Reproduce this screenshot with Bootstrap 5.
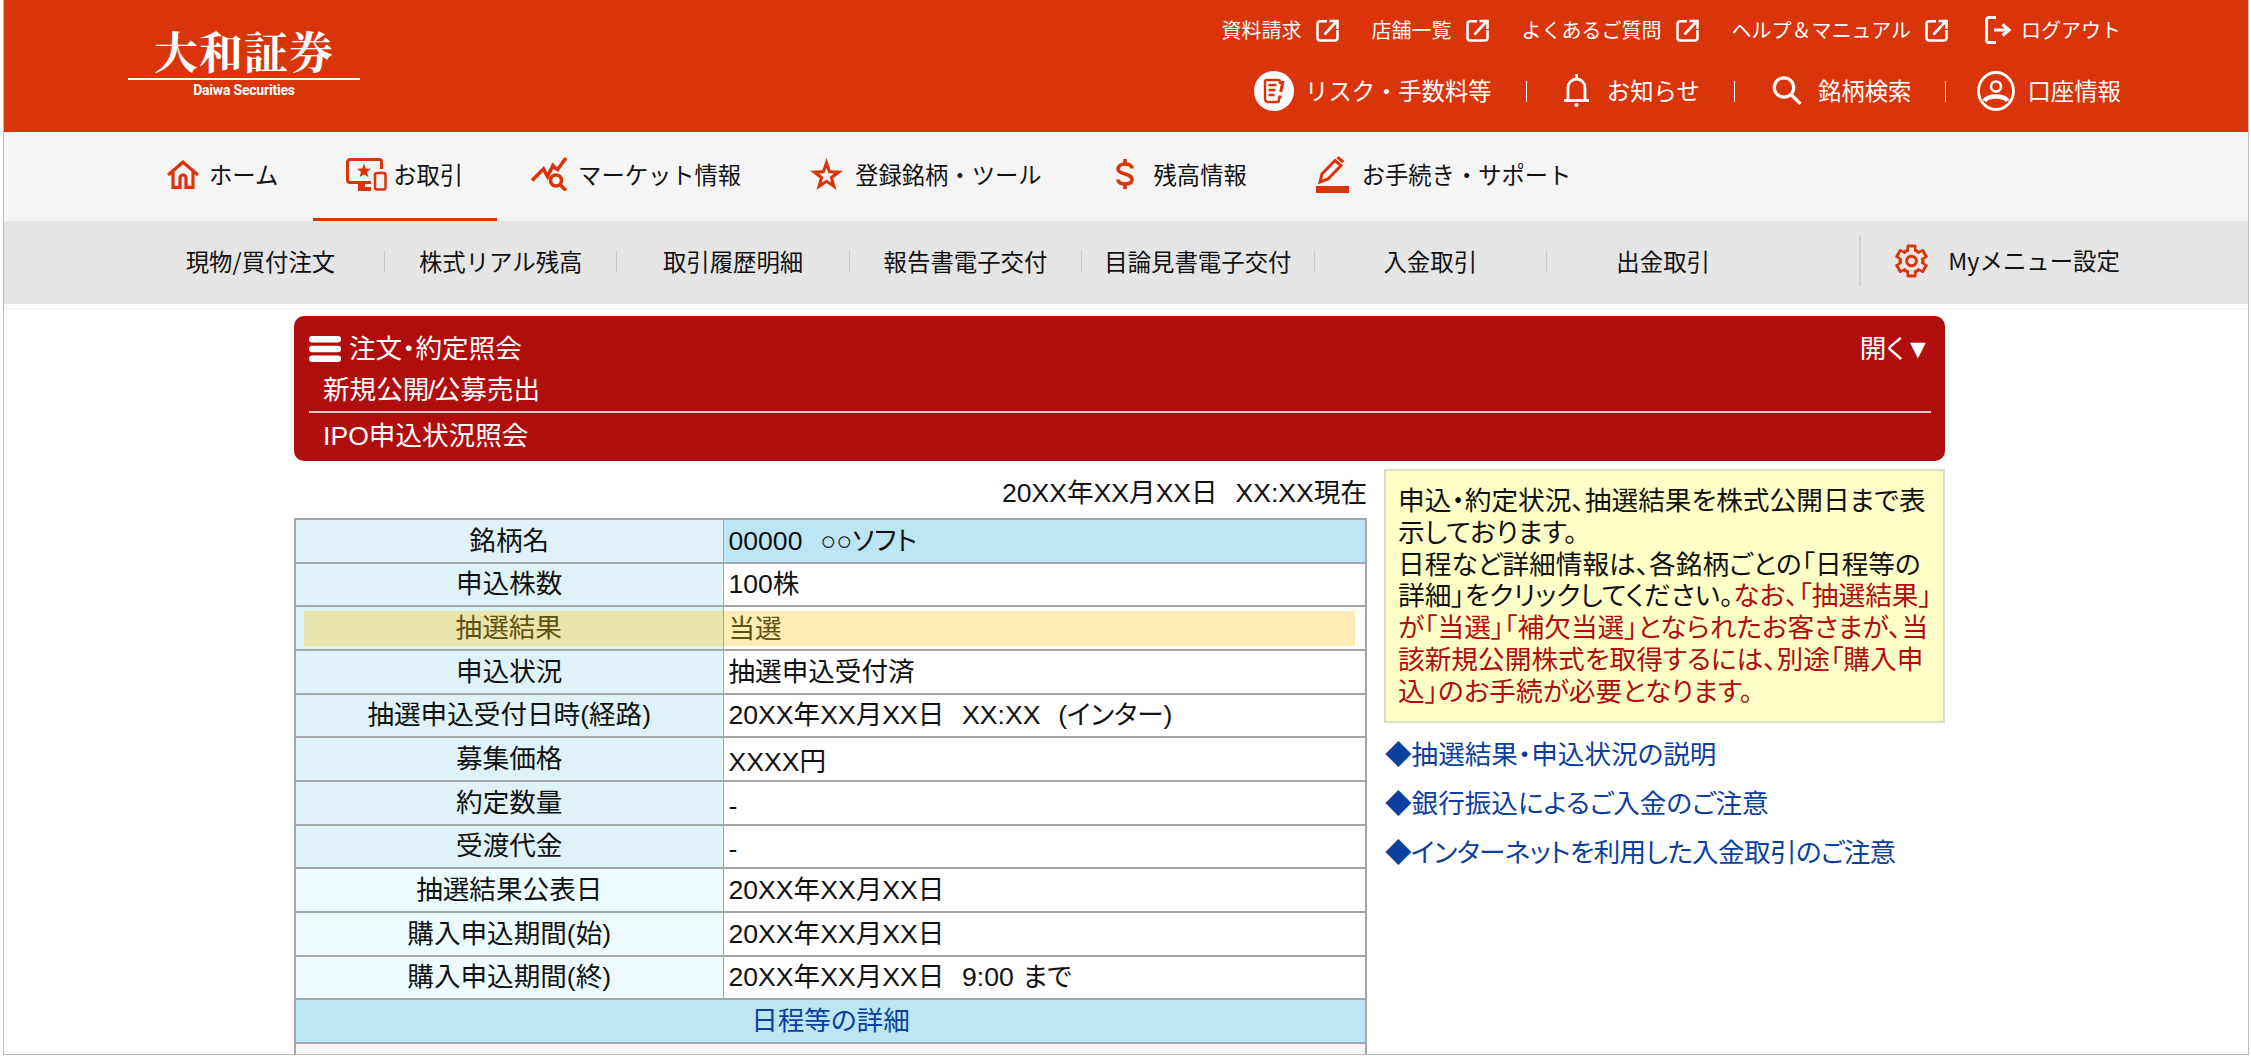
<!DOCTYPE html>
<html lang="ja">
<head>
<meta charset="utf-8">
<title>大和証券</title>
<link href="https://cdn.jsdelivr.net/npm/bootstrap@5.3.0/dist/css/bootstrap.min.css" rel="stylesheet">
<style>
html,body{height:100%;overflow:hidden;background:#fff}
body{font-family:"Noto Sans CJK JP","Liberation Sans",sans-serif;color:#111}
.frame{margin:0 2px 0 3px;height:1055px;overflow:hidden;border:solid #bdbdbd;border-width:0 1px 1px 1px}
.hdr{height:132px;background:#d9340a;color:#fff}
.logo-wrap{margin-left:124px;width:232px;padding-top:25px;text-align:center}
.logo-jp{font-family:"Noto Serif CJK JP","Noto Sans CJK JP",serif;font-size:44px;line-height:50px;letter-spacing:1px;font-weight:700}
.logo-rule{height:2px;background:#fff;margin-top:3px}
.logo-en{font-family:"Roboto",sans-serif;font-weight:700;font-size:14px;line-height:20px;letter-spacing:-.2px}
.util-col{padding-right:127px}
.util-row1{height:60px;font-size:20px}
.util-row2{height:62px;font-size:23.4px}
.util-item{margin-left:33px;gap:14px;white-space:nowrap}
.util-item svg,.gnav-item svg{display:block;flex:none}
.logout{margin-left:37px;gap:9px}
.row2-item{gap:11px;white-space:nowrap}
.gap-bell{gap:17px;margin-left:2px}
.gap-find{gap:16px;margin-left:3px}
.gap-acct{gap:12px;margin-left:-3px}
.sep-v{width:1px;height:21px;background:#fff;margin:0 34px 0 34px;flex:none}
.gnav{height:89px;background:#f5f5f5;padding-left:129px;font-size:23.3px}
.gnav-item{height:89px;gap:10px;padding:0 35px 2px;white-space:nowrap;border-bottom:3px solid transparent}
.gnav-item.cur{border-bottom-color:#d9340a;padding:0 34px 2px 33px;gap:6px}
.gi-home{padding-left:34px}
.gi-mkt{padding-left:34px}
.gi-star{padding-left:34px;padding-right:37px;gap:12px}
.gi-cash{padding-left:37px;padding-right:34px;gap:20px}
.gi-form{gap:13px}
.snav{height:83px;background:#e5e5e5;margin-bottom:4px;font-size:23.4px;padding:0 0 3px 133px}
.snav-cell{width:232.4px;height:22px;text-align:center;border-right:1px solid #c9c9c9;line-height:22px;white-space:nowrap;flex:none}
.snav-cell.first{width:248px}
.snav-cell.last{border-right:0}
.snav-cfg{margin-left:80px;height:50px;border-left:2px solid #cfcfcf;padding-left:34px;gap:20px;white-space:nowrap}
.mainzone{border-top:1px solid #f0f0f0;padding:7px 0 0 290px;font-family:"Liberation Sans","Noto Sans CJK JP",sans-serif;font-size:26.6px;font-feature-settings:"palt"}
.pane{width:1651px}
.redbar{background:#b00d0d;color:#fff;border-radius:10px;height:145px;padding:15px 14px 0 15px}
.rb-line{line-height:36px;white-space:nowrap}
.rb-sub{padding-left:14px;margin-top:5px}
.rb-rule{height:2px;background:#e6c8c8;margin-top:3px;margin-bottom:5px}
.slash-nar{margin:0 -1.500px}
.burger{width:32px;height:26px;display:block;margin-right:8px}
.leftcol{width:1073px}
.rightcol{width:561px}
.asof{height:49px;line-height:49px;text-align:right;white-space:pre;word-spacing:1.5px}
.ipo-table{width:1073px;table-layout:fixed;margin:0;border-collapse:collapse;border:2px solid #a5a5a5}
.ipo-table td{height:43.67px;padding:0 5px;border:2px solid #a5a5a5;border-left-width:1px;border-right-width:1px;vertical-align:middle;line-height:30px;background:#fff;color:#111;white-space:pre;box-shadow:none;word-spacing:1.5px}
.ipo-table td.lb{text-align:center;background:#dff2f8;padding:0}
.ipo-table td.lb2{text-align:center;background:#eefbfe;padding:0}
.ipo-table td.hd{background:#bce6f5}
.ipo-table td.hc{text-align:center;background:#bce6f5;color:#0d3f9e}
.ipo-table td.gr{background:#f6f6f6}
.ipo-table td.low{padding-top:6px}
.hl-l{margin-left:8px;height:35px;line-height:35px;background:#e9e3ac;color:#5f5210;padding-right:9px}
.ipo-table td.hl-c{padding:0 10px 0 0}
.hl-r{height:35px;line-height:37px;background:#feecb5;color:#5f5210;padding-left:5px}
.notebox{background:#ffffc8;border:2px solid #dcdcc8;height:254px;padding:15px 4px 0 12px;line-height:31.8px;white-space:nowrap;font-size:26.7px}
.notered{color:#b00d0d}
.lnk{display:block;color:#0d3f9e;text-decoration:none;line-height:49px;white-space:nowrap;padding-left:1px}
.lnk-tight{letter-spacing:-.65px}
.lnks{margin-top:8px}
</style>
</head>
<body>
<div class="frame">
  <header class="hdr d-flex justify-content-between">
    <div class="logo-wrap">
      <div class="logo-jp">大和証券</div>
      <div class="logo-rule"></div>
      <div class="logo-en">Daiwa Securities</div>
    </div>
    <div class="util-col">
      <div class="util-row1 d-flex align-items-center justify-content-end">
        <a class="util-item d-flex align-items-center text-white text-decoration-none">資料請求
          <svg width="23" height="23" viewBox="0 0 23 23" fill="none" stroke="#fff" stroke-width="2.6"><path d="M11 2.3H4A2.5 2.5 0 0 0 1.5 4.8v14A2.7 2.7 0 0 0 4 21.5h15a2.5 2.5 0 0 0 2.5-2.5v-8"/><path d="M8.5 15.5L20 3M13.5 2h8v8"/></svg></a>
        <a class="util-item d-flex align-items-center text-white text-decoration-none">店舗一覧
          <svg width="23" height="23" viewBox="0 0 23 23" fill="none" stroke="#fff" stroke-width="2.6"><path d="M11 2.3H4A2.5 2.5 0 0 0 1.5 4.8v14A2.7 2.7 0 0 0 4 21.5h15a2.5 2.5 0 0 0 2.5-2.5v-8"/><path d="M8.5 15.5L20 3M13.5 2h8v8"/></svg></a>
        <a class="util-item d-flex align-items-center text-white text-decoration-none">よくあるご質問
          <svg width="23" height="23" viewBox="0 0 23 23" fill="none" stroke="#fff" stroke-width="2.6"><path d="M11 2.3H4A2.5 2.5 0 0 0 1.5 4.8v14A2.7 2.7 0 0 0 4 21.5h15a2.5 2.5 0 0 0 2.5-2.5v-8"/><path d="M8.5 15.5L20 3M13.5 2h8v8"/></svg></a>
        <a class="util-item d-flex align-items-center text-white text-decoration-none">ヘルプ＆マニュアル
          <svg width="23" height="23" viewBox="0 0 23 23" fill="none" stroke="#fff" stroke-width="2.6"><path d="M11 2.3H4A2.5 2.5 0 0 0 1.5 4.8v14A2.7 2.7 0 0 0 4 21.5h15a2.5 2.5 0 0 0 2.5-2.5v-8"/><path d="M8.5 15.5L20 3M13.5 2h8v8"/></svg></a>
        <a class="util-item logout d-flex align-items-center text-white text-decoration-none">
          <svg width="27" height="28" viewBox="0 0 27 28" fill="none" stroke="#fff" stroke-width="3"><path d="M11 1.5H4A2.5 2.5 0 0 0 1.5 4v20A2.5 2.5 0 0 0 4 26.5h7"/><path d="M9 14h14"/><path d="M17.5 8.5L24 14l-6.5 5.5" stroke-width="3.2"/></svg>ログアウト</a>
      </div>
      <div class="util-row2 d-flex align-items-center justify-content-end">
        <a class="row2-item d-flex align-items-center text-white text-decoration-none">
          <svg width="40" height="40" viewBox="0 0 40 40"><circle cx="20" cy="20" r="20" fill="#fff"/><g fill="none" stroke="#d9340a" stroke-width="2.4"><path d="M26 13v-2a2 2 0 0 0-2-2H13a2 2 0 0 0-2 2v17a3 3 0 0 0 3 3h9a2 2 0 0 0 2-2v-3"/><path d="M14.5 14h8M14.5 19h7M14.5 24h6"/><path d="M29 10l-2.2 11" stroke-width="3.2"/></g><circle cx="26" cy="26" r="1.8" fill="#d9340a"/></svg>リスク・手数料等</a>
        <span class="sep-v"></span>
        <a class="row2-item gap-bell d-flex align-items-center text-white text-decoration-none">
          <svg width="27" height="33" viewBox="0 0 27 33" fill="none" stroke="#fff" stroke-width="2.8"><path d="M13.5 0v4"/><path d="M5 26V13.5a8.5 8.5 0 0 1 17 0V26"/><path d="M1 26.5h25"/><circle cx="13.500" cy="31" r="2" fill="#fff" stroke="none"/></svg>お知らせ</a>
        <span class="sep-v"></span>
        <a class="row2-item gap-find d-flex align-items-center text-white text-decoration-none">
          <svg width="30" height="29" viewBox="0 0 30 29" fill="none" stroke="#fff" stroke-width="3.2"><circle cx="12" cy="11.500" r="9.700"/><path d="M19 18.500l9.500 9.500"/></svg>銘柄検索</a>
        <span class="sep-v"></span>
        <a class="row2-item gap-acct d-flex align-items-center text-white text-decoration-none">
          <svg width="38" height="40" viewBox="0 0 38 40" fill="none" stroke="#fff"><ellipse cx="19" cy="20" rx="17.500" ry="18.500" stroke-width="2.800"/><circle cx="19" cy="15.500" r="5" stroke-width="2.600"/><path d="M7.500 30c3-6 20-6 23 0" stroke-width="4.500"/></svg>口座情報</a>
      </div>
    </div>
  </header>

  <nav class="gnav d-flex">
    <a class="gnav-item gi-home d-flex align-items-center text-reset text-decoration-none">
      <svg width="32" height="29" viewBox="0 0 32 29" fill="none" stroke="#d9340a" stroke-width="3.200"><path d="M1 15L16 2.200 31 15"/><path d="M6 12v15.400h7V18a3 3 0 0 1 6 0v9.400h7V12"/></svg>ホーム</a>
    <a class="gnav-item cur d-flex align-items-center text-reset text-decoration-none">
      <svg width="41" height="33" viewBox="0 0 41 33"><path d="M25 24.500H4a2.500 2.500 0 0 1-2.500-2.500V4A2.500 2.500 0 0 1 4 1.500h29A2.500 2.500 0 0 1 35.500 4v7" fill="none" stroke="#d9340a" stroke-width="3"/><rect x="12" y="25" width="7" height="4" fill="#d9340a"/><rect x="12" y="29" width="13" height="4" fill="#d9340a"/><polygon fill="#d9340a" points="18,5.500 19.800,10.500 25,10.700 21,14 22.300,19 18,16.200 13.700,19 15,14 11,10.700 16.200,10.500"/><rect x="29" y="15" width="10.500" height="16.500" rx="1.800" fill="#f5f5f5" stroke="#d9340a" stroke-width="2.500"/></svg>お取引</a>
    <a class="gnav-item gi-mkt d-flex align-items-center text-reset text-decoration-none">
      <svg width="37" height="34" viewBox="0 0 37 34" fill="none" stroke="#d9340a" stroke-width="3.600"><path d="M1 23.500L12.500 12l4 7.500L22 8.500l3 3.500"/><path d="M25.500 14L35 1"/><circle cx="25" cy="23.500" r="5.500"/><path d="M29 27.500l6 6"/></svg>マーケット情報</a>
    <a class="gnav-item gi-star d-flex align-items-center text-reset text-decoration-none">
      <svg width="33" height="33" viewBox="0 0 33 33"><polygon fill="#d9340a" points="16.500,0 20.600,12.300 33,12.700 23.200,20.200 26.500,32 16.500,25 6.500,32 9.800,20.200 0,12.700 12.400,12.300"/><polygon fill="#f5f5f5" points="16.500,10 18.500,15.200 24,15.500 19.700,19 21.200,24.500 16.500,21.400 11.800,24.500 13.300,19 9,15.500 14.500,15.200"/></svg>登録銘柄・ツール</a>
    <a class="gnav-item gi-cash d-flex align-items-center text-reset text-decoration-none">
      <svg width="18" height="30" viewBox="0 0 18 30" fill="none" stroke="#d9340a" stroke-width="3.600"><path d="M16 9.500C16 6.500 13 5 9 5S2 7 2 10s3 4 7 5 7 2 7 5.500S13 25 9 25s-7-1.500-7-4.500"/><path d="M9 0v5M9 25v5"/></svg>残高情報</a>
    <a class="gnav-item gi-form d-flex align-items-center text-reset text-decoration-none">
      <svg width="33" height="37" viewBox="0 0 33 37"><rect x="0" y="30" width="33" height="7" fill="#d9340a"/><path d="M4 26l2-8L19 4.500l6 5L12 23z" fill="none" stroke="#d9340a" stroke-width="3"/><path d="M22.500 0l6 5-2 2.200-6-5z" fill="#d9340a"/></svg>お手続き・サポート</a>
  </nav>

  <nav class="snav d-flex align-items-center">
    <a class="snav-cell first text-reset text-decoration-none">現物/買付注文</a>
    <a class="snav-cell text-reset text-decoration-none">株式リアル残高</a>
    <a class="snav-cell text-reset text-decoration-none">取引履歴明細</a>
    <a class="snav-cell text-reset text-decoration-none">報告書電子交付</a>
    <a class="snav-cell text-reset text-decoration-none">目論見書電子交付</a>
    <a class="snav-cell text-reset text-decoration-none">入金取引</a>
    <a class="snav-cell last text-reset text-decoration-none">出金取引</a>
    <a class="snav-cfg d-flex align-items-center text-reset text-decoration-none">
      <svg width="33" height="34" viewBox="0 0 33 34">
        <g fill="#d9340a"><circle cx="16.500" cy="17" r="13"/><rect x="11.500" y="0.500" width="10" height="33" rx="1.500"/><rect x="11.500" y="0.500" width="10" height="33" rx="1.500" transform="rotate(60 16.500 17)"/><rect x="11.500" y="0.500" width="10" height="33" rx="1.500" transform="rotate(120 16.500 17)"/></g>
        <g fill="#e5e5e5"><circle cx="16.500" cy="17" r="9.800"/><rect x="14" y="3.500" width="5" height="27"/><rect x="14" y="3.500" width="5" height="27" transform="rotate(60 16.500 17)"/><rect x="14" y="3.500" width="5" height="27" transform="rotate(120 16.500 17)"/></g>
        <circle cx="16.500" cy="17" r="4.800" fill="none" stroke="#d9340a" stroke-width="3"/>
      </svg>Myメニュー設定</a>
  </nav>

  <main class="mainzone">
    <div class="pane">
      <div class="redbar">
        <div class="d-flex justify-content-between">
          <div class="d-flex align-items-center rb-line">
            <svg class="burger" viewBox="0 0 32 26" fill="#fff"><rect width="32" height="6.500" y="0" rx="3"/><rect width="32" height="6.500" y="9.700" rx="3"/><rect width="32" height="6.500" y="19.500" rx="3"/></svg>注文・約定照会</div>
          <div class="rb-line">開く▼</div>
        </div>
        <div class="rb-line rb-sub">新規公開<span class="slash-nar">/</span>公募売出</div>
        <div class="rb-rule"></div>
        <div class="rb-line rb-sub mt-0">IPO申込状況照会</div>
      </div>
      <div class="d-flex justify-content-between mt-2">
        <div class="leftcol">
          <div class="asof">20XX年XX月XX日  XX:XX現在</div>
          <table class="table ipo-table">
            <colgroup><col style="width:428px"><col></colgroup>
            <tbody>
              <tr><td class="lb">銘柄名</td><td class="hd">00000  ○○ソフト</td></tr>
              <tr><td class="lb">申込株数</td><td>100株</td></tr>
              <tr><td class="lb"><div class="hl-l">抽選結果</div></td><td class="hl-c"><div class="hl-r">当選</div></td></tr>
              <tr><td class="lb">申込状況</td><td>抽選申込受付済</td></tr>
              <tr><td class="lb">抽選申込受付日時(経路)</td><td>20XX年XX月XX日  XX:XX  (インター)</td></tr>
              <tr><td class="lb">募集価格</td><td class="low">XXXX円</td></tr>
              <tr><td class="lb">約定数量</td><td class="low">-</td></tr>
              <tr><td class="lb">受渡代金</td><td class="low">-</td></tr>
              <tr><td class="lb2">抽選結果公表日</td><td>20XX年XX月XX日</td></tr>
              <tr><td class="lb2">購入申込期間(始)</td><td>20XX年XX月XX日</td></tr>
              <tr><td class="lb2">購入申込期間(終)</td><td>20XX年XX月XX日  9:00 まで</td></tr>
              <tr><td class="hc" colspan="2">日程等の詳細</td></tr>
              <tr><td class="gr" colspan="2">&nbsp;</td></tr>
            </tbody>
          </table>
        </div>
        <aside class="rightcol">
          <div class="notebox">申込・約定状況、抽選結果を株式公開日まで表<br>示しております。<br>日程など詳細情報は、各銘柄ごとの「日程等の<br>詳細」をクリックしてください。<span class="notered">なお、「抽選結果」<br>が「当選」「補欠当選」となられたお客さまが、当<br>該新規公開株式を取得するには、別途「購入申<br>込」のお手続が必要となります。</span></div>
          <div class="lnks">
            <a class="lnk">◆抽選結果・申込状況の説明</a>
            <a class="lnk">◆銀行振込によるご入金のご注意</a>
            <a class="lnk lnk-tight">◆インターネットを利用した入金取引のご注意</a>
          </div>
        </aside>
      </div>
    </div>
  </main>
</div>
<script src="https://cdn.jsdelivr.net/npm/bootstrap@5.3.0/dist/js/bootstrap.bundle.min.js"></script>
</body>
</html>
